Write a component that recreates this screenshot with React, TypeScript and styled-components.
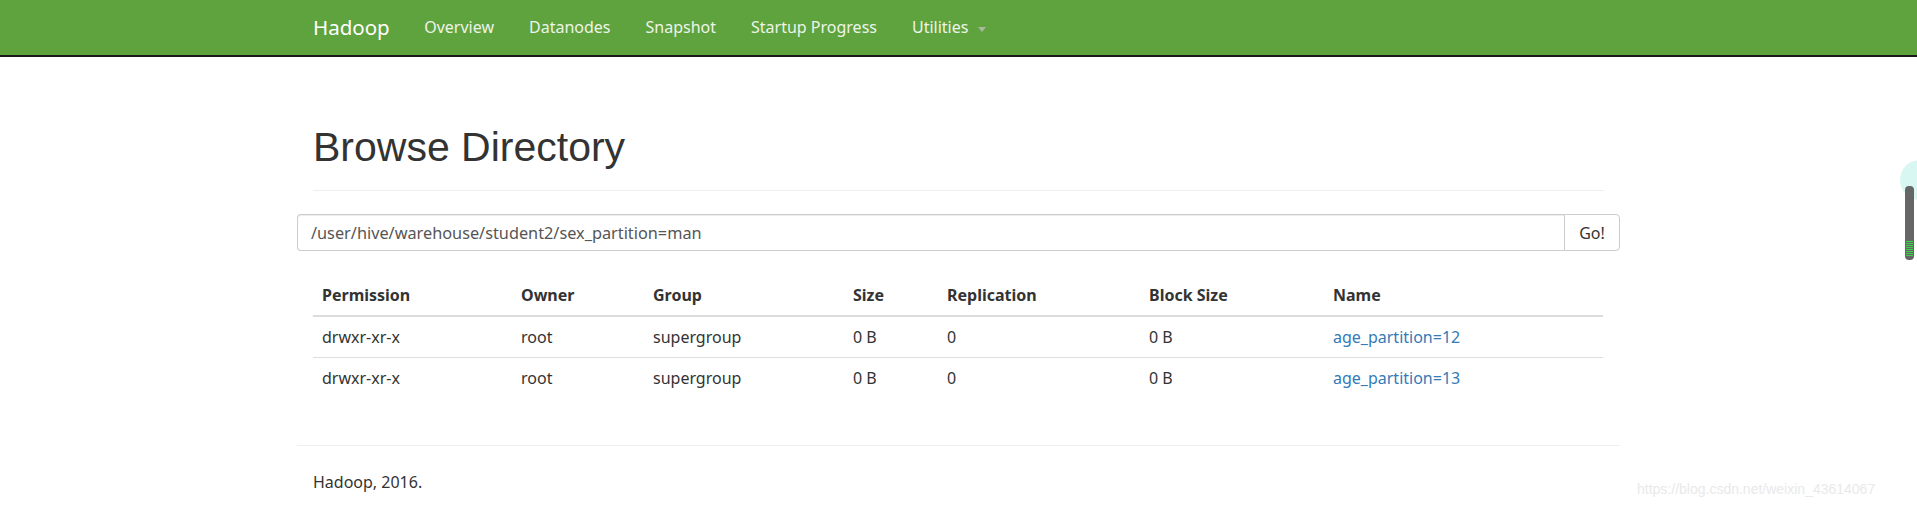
import { FC } from 'react'
import styled, { createGlobalStyle } from 'styled-components'

const GlobalStyle = createGlobalStyle`
  html, body {
    margin: 0;
    padding: 0;
    background: #fff;
  }
  body {
    font-family: "Noto Sans", "Open Sans", sans-serif;
    font-size: 16px;
    color: #333;
  }
`

const Navbar = styled.nav`
  background-color: #5fa33e;
  border-bottom: 2px solid #1a1a1a;
  height: 55px;
`
const NavInner = styled.div`
  width: 1323px;
  margin: 0 auto;
  height: 100%;
  display: flex;
  align-items: center;
  padding: 0 16px;
  box-sizing: border-box;
`
const Brand = styled.a`
  color: #fff;
  font-size: 20.5px;
  padding-right: 17px;
  text-decoration: none;
  line-height: 55px;
`
const NavLink = styled.a`
  color: #eef4e9;
  font-size: 16px;
  padding: 0 17.5px;
  line-height: 55px;
  text-decoration: none;
  display: flex;
  align-items: center;
`
const Caret = styled.span`
  display: inline-block;
  width: 0;
  height: 0;
  margin-left: 10px;
  margin-top: 3px;
  border-top: 5px solid #a9b8a2;
  border-left: 4px solid transparent;
  border-right: 4px solid transparent;
`

const Container = styled.div`
  width: 1323px;
  margin: 0 auto;
`
const Section = styled.div`
  padding: 0 16px;
`
const Title = styled.h1`
  margin: 0;
  padding-top: 68px;
  font-family: "Liberation Sans", Arial, sans-serif;
  font-weight: 400;
  font-size: 41px;
  line-height: 45px;
  color: #333;
`
const Rule = styled.hr<{ $top: number }>`
  border: 0;
  border-top: 1px solid #eee;
  margin: ${p => p.$top}px 0 0;
`
const InputGroup = styled.div`
  display: flex;
  margin-top: 23px;
  height: 37px;
`
const PathInput = styled.input`
  flex: 1;
  height: 37px;
  box-sizing: border-box;
  border: 1px solid #ccc;
  border-right: 0;
  border-radius: 4px 0 0 4px;
  padding: 0 13px;
  font-family: "Noto Sans", "Open Sans", sans-serif;
  font-size: 16.3px;
  color: #555;
  outline: none;
  box-shadow: inset 0 1px 1px rgba(0, 0, 0, 0.075);
`
const GoButton = styled.button`
  width: 56px;
  height: 37px;
  box-sizing: border-box;
  border: 1px solid #ccc;
  border-radius: 0 4px 4px 0;
  background: #fff;
  font-family: "Noto Sans", "Open Sans", sans-serif;
  font-size: 16px;
  color: #333;
  padding: 0;
`
const Table = styled.table`
  width: 1290px;
  margin-top: 24px;
  border-collapse: collapse;
  table-layout: fixed;
`
const Th = styled.th`
  text-align: left;
  font-weight: 700;
  padding: 8px 9px;
  line-height: 24px;
  border-bottom: 2px solid #ddd;
  color: #333;
`
const Row = styled.tr`
  & + & td {
    border-top: 1px solid #ddd;
  }
`
const Td = styled.td`
  padding: 8px 9px;
  line-height: 24px;
  color: #333;
`
const NameLink = styled.a`
  color: #337ab7;
  text-decoration: none;
`
const Footer = styled.footer`
  margin-top: 47px;
  border-top: 1px solid #eee;
`
const FooterText = styled.p`
  margin: 0;
  padding: 24px 16px 0;
  font-size: 16px;
  line-height: 24px;
  color: #333;
`
const Watermark = styled.div`
  position: absolute;
  left: 1637px;
  top: 481px;
  font-family: "Liberation Sans", Arial, sans-serif;
  font-size: 14px;
  color: #e9e9e9;
`
const ScrollWidget = styled.div`
  position: absolute;
  left: 1905px;
  top: 186px;
  width: 9px;
  height: 74px;
  border-radius: 4px;
  background: #666;
  overflow: hidden;
  display: flex;
  flex-direction: column;
  justify-content: flex-end;
  padding-bottom: 4px;
  box-sizing: border-box;
  align-items: center;
  gap: 1px;
`
const Glow = styled.div`
  position: absolute;
  left: 1900px;
  top: 160px;
  width: 40px;
  height: 40px;
  border-radius: 50%;
  background: #d8f6f2;
`
const Stripe = styled.span`
  width: 7px;
  height: 1px;
  background: #3fd24a;
`

const cols = [199, 132, 200, 94, 202, 184, 279]
const heads = ['Permission', 'Owner', 'Group', 'Size', 'Replication', 'Block Size', 'Name']
const rows = [
  ['drwxr-xr-x', 'root', 'supergroup', '0 B', '0', '0 B', 'age_partition=12'],
  ['drwxr-xr-x', 'root', 'supergroup', '0 B', '0', '0 B', 'age_partition=13'],
]

const App: FC = () => {
  return (
    <>
      <GlobalStyle />
      <Navbar>
        <NavInner>
          <Brand href="#">Hadoop</Brand>
          <NavLink href="#">Overview</NavLink>
          <NavLink href="#">Datanodes</NavLink>
          <NavLink href="#">Snapshot</NavLink>
          <NavLink href="#">Startup Progress</NavLink>
          <NavLink href="#">Utilities<Caret /></NavLink>
        </NavInner>
      </Navbar>
      <Container>
        <Section>
          <Title>Browse Directory</Title>
          <Rule $top={20} />
        </Section>
        <InputGroup>
          <PathInput defaultValue="/user/hive/warehouse/student2/sex_partition=man" />
          <GoButton>Go!</GoButton>
        </InputGroup>
        <Section>
          <Table>
            <colgroup>
              {cols.map((w, i) => <col key={i} style={{ width: w }} />)}
            </colgroup>
            <thead>
              <tr>
                {heads.map(h => <Th key={h}>{h}</Th>)}
              </tr>
            </thead>
            <tbody>
              {rows.map((r, i) => (
                <Row key={i}>
                  {r.slice(0, 6).map((c, j) => <Td key={j}>{c}</Td>)}
                  <Td><NameLink href="#">{r[6]}</NameLink></Td>
                </Row>
              ))}
            </tbody>
          </Table>
        </Section>
        <Footer>
          <FooterText>Hadoop, 2016.</FooterText>
        </Footer>
      </Container>
      <Glow />
      <ScrollWidget>
        {Array.from({ length: 8 }).map((_, i) => <Stripe key={i} />)}
      </ScrollWidget>
      <Watermark>https://blog.csdn.net/weixin_43614067</Watermark>
    </>
  )
}

export default App
